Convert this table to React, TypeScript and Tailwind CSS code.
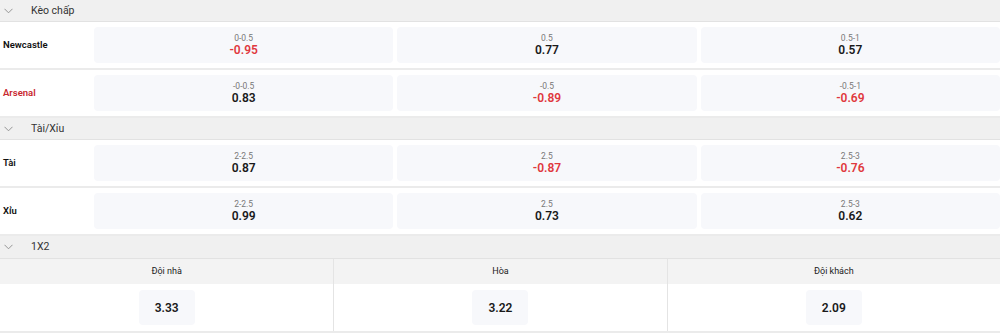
const RED = 'text-[#e0383e]'

type Odd = { line: string; value: string }
type Row = { name: string; red?: boolean; odds: Odd[] }

const handicap: Row[] = [
  {
    name: 'Newcastle',
    odds: [
      { line: '0-0.5', value: '-0.95' },
      { line: '0.5', value: '0.77' },
      { line: '0.5-1', value: '0.57' },
    ],
  },
  {
    name: 'Arsenal',
    red: true,
    odds: [
      { line: '-0-0.5', value: '0.83' },
      { line: '-0.5', value: '-0.89' },
      { line: '-0.5-1', value: '-0.69' },
    ],
  },
]

const overUnder: Row[] = [
  {
    name: 'Tài',
    odds: [
      { line: '2-2.5', value: '0.87' },
      { line: '2.5', value: '-0.87' },
      { line: '2.5-3', value: '-0.76' },
    ],
  },
  {
    name: 'Xỉu',
    odds: [
      { line: '2-2.5', value: '0.99' },
      { line: '2.5', value: '0.73' },
      { line: '2.5-3', value: '0.62' },
    ],
  },
]

const x12 = [
  { label: 'Đội nhà', value: '3.33' },
  { label: 'Hòa', value: '3.22' },
  { label: 'Đội khách', value: '2.09' },
]

const SectionHeader = ({ title, tall }: { title: string; tall?: boolean }) => (
  <div
    className={`flex items-center bg-[#f0f0f0] border-b border-[#e2e2e2] ${tall ? 'h-[23px]' : 'h-[22px]'}`}
  >
    <svg width="9" height="6" viewBox="0 0 9 6" className="ml-[4px]" fill="none">
      <path d="M0.5 0.8 L4.5 4.8 L8.5 0.8" stroke="#8a8a8a" strokeWidth="0.9" />
    </svg>
    <span className="ml-[18px] text-[10.5px] text-[#333]">{title}</span>
  </div>
)

const OddsRow = ({ row }: { row: Row }) => (
  <div className="flex h-[48px] py-[5px] border-b-2 border-[#ebebeb]">
    <div
      className={`w-[94px] shrink-0 flex items-center pl-[3px] text-[9.5px] font-semibold ${row.red ? 'text-[#c8282e]' : 'text-[#111]'}`}
    >
      {row.name}
    </div>
    <div className="flex-1 grid grid-cols-3 gap-1">
      {row.odds.map((o, i) => (
        <div
          key={i}
          className="rounded-[4px] bg-[#f7f8fb] flex flex-col items-center justify-center"
        >
          <span className="text-[8.5px] leading-[10px] text-[#777]">{o.line}</span>
          <span
            className={`text-[12px] leading-[14px] font-semibold ${o.value.startsWith('-') ? RED : 'text-[#1a1a1a]'}`}
          >
            {o.value}
          </span>
        </div>
      ))}
    </div>
  </div>
)

export default function App() {
  return (
    <div className="w-[1000px] h-[334px] bg-white overflow-hidden font-['Roboto',sans-serif]">
      <SectionHeader title="Kèo chấp" />
      {handicap.map((r) => (
        <OddsRow key={r.name} row={r} />
      ))}
      <SectionHeader title="Tài/Xỉu" />
      {overUnder.map((r) => (
        <OddsRow key={r.name} row={r} />
      ))}
      <SectionHeader title="1X2" tall />
      <div className="grid grid-cols-3 border-b-2 border-[#ebebeb]">
        {x12.map((c, i) => (
          <div key={c.label} className={i > 0 ? 'border-l border-[#e4e4e4]' : ''}>
            <div className="h-[25px] bg-[#f3f3f3] flex items-center justify-center text-[9px] text-[#222]">
              {c.label}
            </div>
            <div className="h-[47px] flex items-center justify-center">
              <div className="w-[56px] h-[35px] rounded-[4px] bg-[#f7f8fb] flex items-center justify-center text-[12px] font-semibold text-[#1a1a1a]">
                {c.value}
              </div>
            </div>
          </div>
        ))}
      </div>
    </div>
  )
}
